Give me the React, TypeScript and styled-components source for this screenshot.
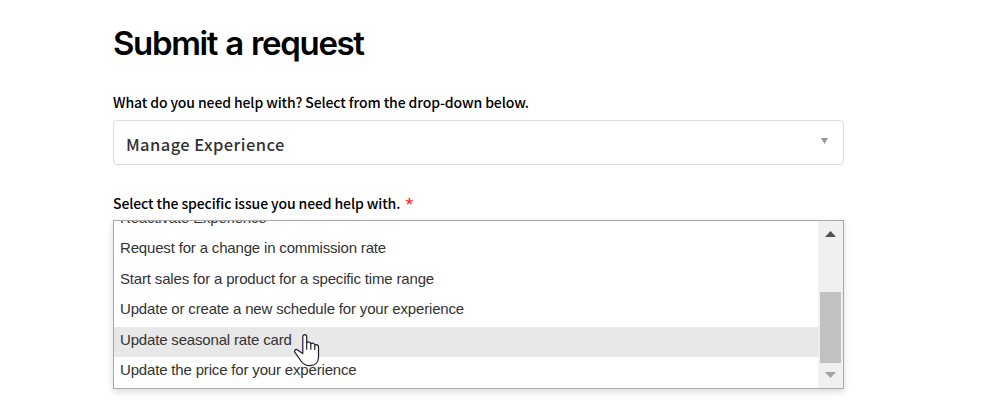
import React from "react";
import styled, { createGlobalStyle } from "styled-components";

const GlobalStyle = createGlobalStyle`
  *, *::before, *::after { box-sizing: border-box; }
  html, body { margin: 0; background: #fff; }
  body { overflow: hidden; }
`;

const Page = styled.main`
  position: relative;
  width: 984px;
  height: 404px;
  padding: 21px 140px 0 113px;
  background: #fff;
  color: #000;
`;

const Title = styled.h1`
  margin: 0;
  height: 44px;
  font: 600 33px/44px Inter, sans-serif;
  letter-spacing: -1.35px;
  word-spacing: 1.2px;
  white-space: nowrap;
`;

const Field = styled.section<{ $gap: number }>`
  display: flex;
  flex-direction: column;
  margin-top: ${(p) => p.$gap}px;
`;

const Label = styled.label<{ $space: number }>`
  height: 20px;
  margin-bottom: ${(p) => p.$space}px;
  font: 500 14px/20px "Noto Sans CJK SC", sans-serif;
  letter-spacing: -0.11px;
  white-space: nowrap;
`;

const Required = styled.span`
  margin-left: 5px;
  color: #f00;
  font: 15px/16px "Open Sans", sans-serif;
  vertical-align: 0;
`;

const SelectBox = styled.div`
  display: flex;
  align-items: center;
  justify-content: space-between;
  height: 45px;
  padding: 3px 15px 0 12px;
  border: 1px solid #ddd;
  border-radius: 4px;
  color: #333;
  font: 500 16.5px/24px "Noto Sans CJK SC", sans-serif;
  letter-spacing: 0.42px;
`;

const Caret = styled.svg`
  width: 7px;
  height: 6px;
  margin-top: -7px;
  fill: #999;
`;

const Menu = styled.div`
  display: flex;
  height: 169px;
  border: 1px solid #a9a9a9;
  box-shadow: 0 3px 7px rgba(0, 0, 0, 0.14);
  overflow: hidden;
`;

const Options = styled.ul`
  display: flex;
  flex: 1;
  flex-direction: column;
  justify-content: flex-end;
  margin: 0;
  padding: 0 0 0.6px;
  list-style: none;
  overflow: hidden;
`;

const Option = styled.li<{ $active: boolean }>`
  flex: none;
  height: 30.4px;
  padding-left: 6px;
  background: ${(p) => (p.$active ? "#e8e8e8" : "#fff")};
  color: #333;
  font: 15px/26px "Liberation Sans", Arial, sans-serif;
  letter-spacing: -0.17px;
  white-space: nowrap;
`;

const Scrollbar = styled.div`
  display: flex;
  flex-direction: column;
  align-items: center;
  width: 25px;
  padding: 10px 0 9px;
  background: #f0f0f0;
`;

const Arrow = styled.svg<{ $dim?: boolean }>`
  width: 11px;
  height: 6px;
  fill: ${(p) => (p.$dim ? "#a3a3a3" : "#505050")};
`;

const Thumb = styled.div`
  width: 21px;
  height: 71px;
  margin: 55px 0 9px;
  background: #c1c1c1;
`;

const Pointer = styled.svg`
  position: absolute;
  left: 293px;
  top: 333px;
  width: 28px;
  height: 34px;
`;

const options = [
  "Reactivate Experience",
  "Request for a change in commission rate",
  "Start sales for a product for a specific time range",
  "Update or create a new schedule for your experience",
  "Update seasonal rate card",
  "Update the price for your experience",
];

export default function App() {
  return (
    <>
      <GlobalStyle />
      <Page>
        <Title>Submit a request</Title>
        <Field $gap={27}>
          <Label $space={8}>What do you need help with? Select from the drop-down below.</Label>
          <SelectBox>
            Manage Experience
            <Caret viewBox="0 0 7 6"><path d="M0 0h7L3.5 6z" /></Caret>
          </SelectBox>
        </Field>
        <Field $gap={28}>
          <Label $space={7}>
            Select the specific issue you need help with.<Required>*</Required>
          </Label>
          <Menu>
            <Options>
              {options.map((text) => (
                <Option key={text} $active={text === "Update seasonal rate card"}>{text}</Option>
              ))}
            </Options>
            <Scrollbar>
              <Arrow viewBox="0 0 11 6"><path d="M5.5 0 11 6H0z" /></Arrow>
              <Thumb />
              <Arrow $dim viewBox="0 0 11 6"><path d="M0 0h11L5.5 6z" /></Arrow>
            </Scrollbar>
          </Menu>
        </Field>
        <Pointer viewBox="0 0 28 34">
          <path
            d="M9.8 20.5V3.8C9.8 .8 13.7.8 13.7 3.8V9.7C14.8 8.3 17.5 8.8 17.8 10.7C19.3 9.7 21.4 10 21.8 12C23.5 11 25.5 12 25.5 14V24C25.5 29.5 22 32.7 17 32.7C12.5 32.7 10 31.2 8 28L1.8 19.2C.7 17.4 2.8 15.7 4.5 16.9Z"
            fill="#fff"
            stroke="#1c1c30"
            strokeWidth="1.2"
            strokeLinejoin="round"
          />
          <path d="M13.7 9.5v6.7M17.8 10.7v5.5M21.8 12v4.5" fill="none" stroke="#1c1c30" strokeWidth="1.2" strokeLinecap="round" />
        </Pointer>
      </Page>
    </>
  );
}
